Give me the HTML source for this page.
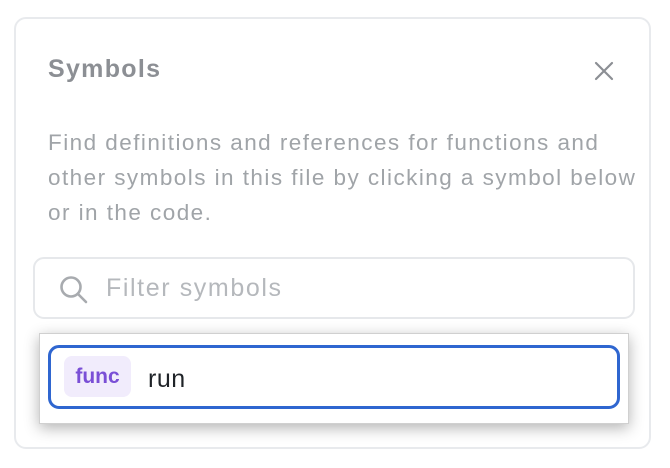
<!DOCTYPE html>
<html><head><style>
body{margin:0;width:670px;height:468px;background:#fff;font-family:"Liberation Sans",sans-serif;position:relative;overflow:hidden}
.panel{position:absolute;left:14px;top:17px;width:637px;height:432px;border:2px solid #e8eaed;border-radius:12px;box-sizing:border-box}
.title{position:absolute;left:48px;top:55px;font-size:25px;font-weight:bold;color:#8c8f94;letter-spacing:1.3px}
.x{position:absolute;left:592px;top:59px}
.p{position:absolute;left:48px;top:125px;width:600px;font-size:22.5px;line-height:35px;color:#a0a4a8;letter-spacing:1.45px;white-space:nowrap}
.search{position:absolute;left:33px;top:257px;width:602px;height:62px;border:2px solid #e6e8eb;border-radius:11px;box-sizing:border-box}
.ph{position:absolute;left:106px;top:274px;font-size:25px;color:#b5b8bc;letter-spacing:1.6px}
.pop{position:absolute;left:39px;top:333px;width:590px;height:91px;background:#fff;border:1px solid #d0d0d0;box-shadow:0 4px 14px rgba(0,0,0,.3);box-sizing:border-box}
.inp{position:absolute;left:48px;top:345px;width:572px;height:64px;border:3px solid #2f66d0;border-radius:11px;box-sizing:border-box}
.badge{position:absolute;left:64px;top:356px;width:67px;height:41px;background:#f1ecfc;border-radius:8px;color:#7a4fd6;font-weight:bold;font-size:21px;text-align:center;line-height:41px}
.run{position:absolute;left:148px;top:365px;font-size:25px;color:#1f2328;letter-spacing:0.5px}
</style></head><body>
<div class="panel"></div>
<div class="title">Symbols</div>
<svg class="x" width="24" height="24" viewBox="0 0 24 24"><path d="M4 4L20 20M20 4L4 20" stroke="#8c8f94" stroke-width="2.2" stroke-linecap="round"/></svg>
<div class="p">Find definitions and references for functions and<br>other symbols in this file by clicking a symbol below<br>or in the code.</div>
<div class="search"></div>
<svg style="position:absolute;left:58px;top:274px" width="32" height="32" viewBox="0 0 32 32"><circle cx="13" cy="13" r="9.5" fill="none" stroke="#a8abaf" stroke-width="2.6"/><path d="M20 20L28 28" stroke="#a8abaf" stroke-width="2.6" stroke-linecap="round"/></svg>
<div class="ph">Filter symbols</div>
<div class="pop"></div>
<div class="inp"></div>
<div class="badge">func</div>
<div class="run">run</div>
</body></html>
